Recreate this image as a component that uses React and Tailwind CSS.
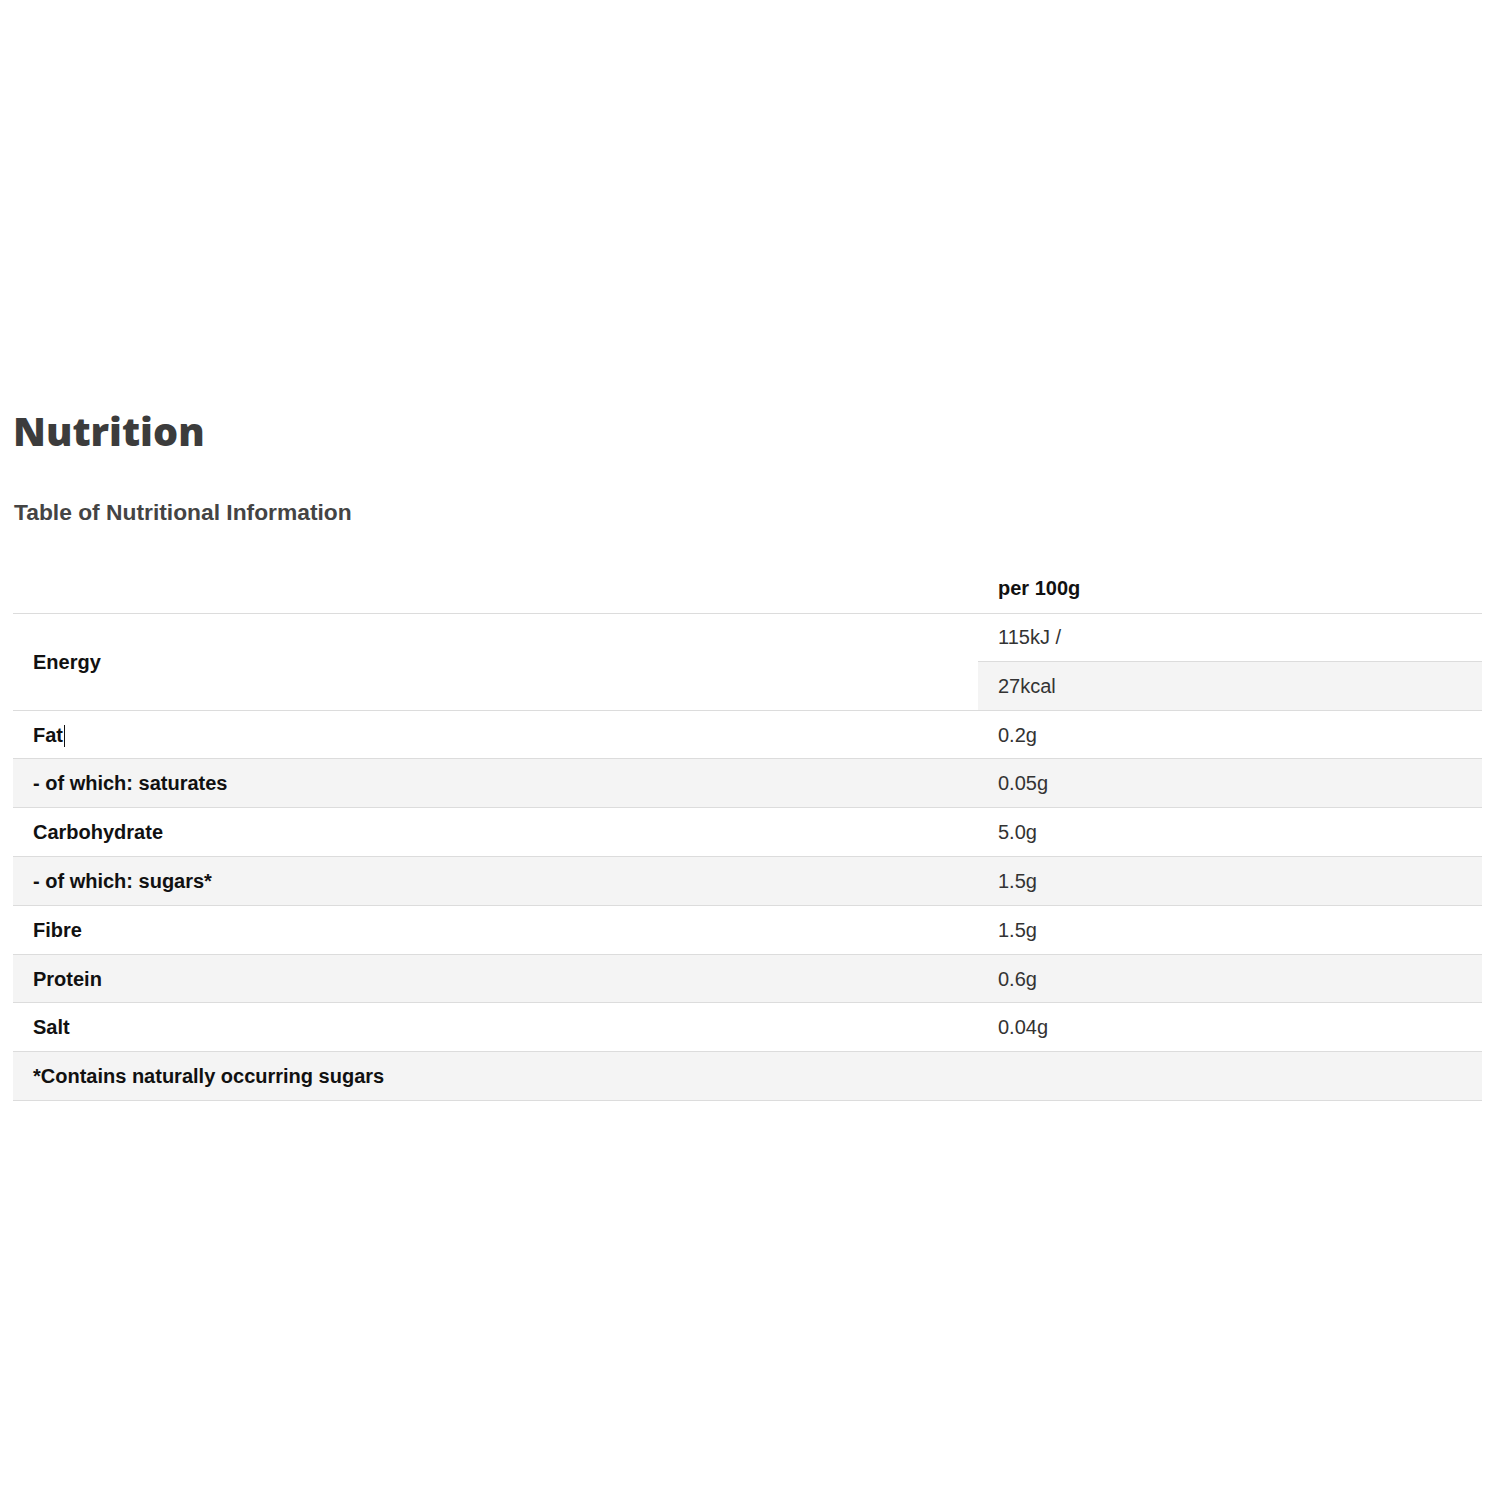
const rows = [
  { label: 'Fat', value: '0.2g', caret: true },
  { label: '- of which: saturates', value: '0.05g', shade: true },
  { label: 'Carbohydrate', value: '5.0g' },
  { label: '- of which: sugars*', value: '1.5g', shade: true },
  { label: 'Fibre', value: '1.5g' },
  { label: 'Protein', value: '0.6g', shade: true },
  { label: 'Salt', value: '0.04g' },
];

export default function App() {
  return (
    <div className="min-h-[1500px] bg-white pt-[401px] px-[13px] font-['Liberation_Sans',Arial,sans-serif]">
      <h2 className="font-['Open_Sans',sans-serif] font-extrabold text-[39.5px] leading-[60px] text-[#3c3c3c]">
        Nutrition
      </h2>
      <h3 className="mt-[36px] pl-px font-bold text-[22.8px] leading-[30px] text-[#444]">
        Table of Nutritional Information
      </h3>
      <table className="mt-[36px] w-[1469px] border-collapse text-[20px]">
        <thead>
          <tr>
            <th className="w-[965px] h-[50px] border-b border-[#dcdcdc]"></th>
            <th className="h-[50px] border-b border-[#dcdcdc] pl-[20px] text-left font-bold text-[#111]">per 100g</th>
          </tr>
        </thead>
        <tbody>
          <tr>
            <td rowSpan={2} className="border-b border-[#dcdcdc] pl-[20px] font-bold text-[#111] bg-white">Energy</td>
            <td className="h-[48.6px] border-b border-[#dcdcdc] pl-[20px] text-[#333]">115kJ /</td>
          </tr>
          <tr>
            <td className="h-[48.6px] border-b border-[#dcdcdc] pl-[20px] text-[#333] bg-[#f4f4f4]">27kcal</td>
          </tr>
          {rows.map((r) => (
            <tr key={r.label} className={r.shade ? 'bg-[#f4f4f4]' : 'bg-white'}>
              <td className="h-[48.8px] border-b border-[#dcdcdc] pl-[20px] font-bold text-[#111]">
                {r.label}
                {r.caret && <span className="inline-block w-px h-[22px] bg-[#111] align-middle ml-px"></span>}
              </td>
              <td className="h-[48.8px] border-b border-[#dcdcdc] pl-[20px] text-[#333]">{r.value}</td>
            </tr>
          ))}
          <tr className="bg-[#f4f4f4]">
            <td colSpan={2} className="h-[48.8px] border-b border-[#dcdcdc] pl-[20px] font-bold text-[#111]">
              *Contains naturally occurring sugars
            </td>
          </tr>
        </tbody>
      </table>
    </div>
  );
}
